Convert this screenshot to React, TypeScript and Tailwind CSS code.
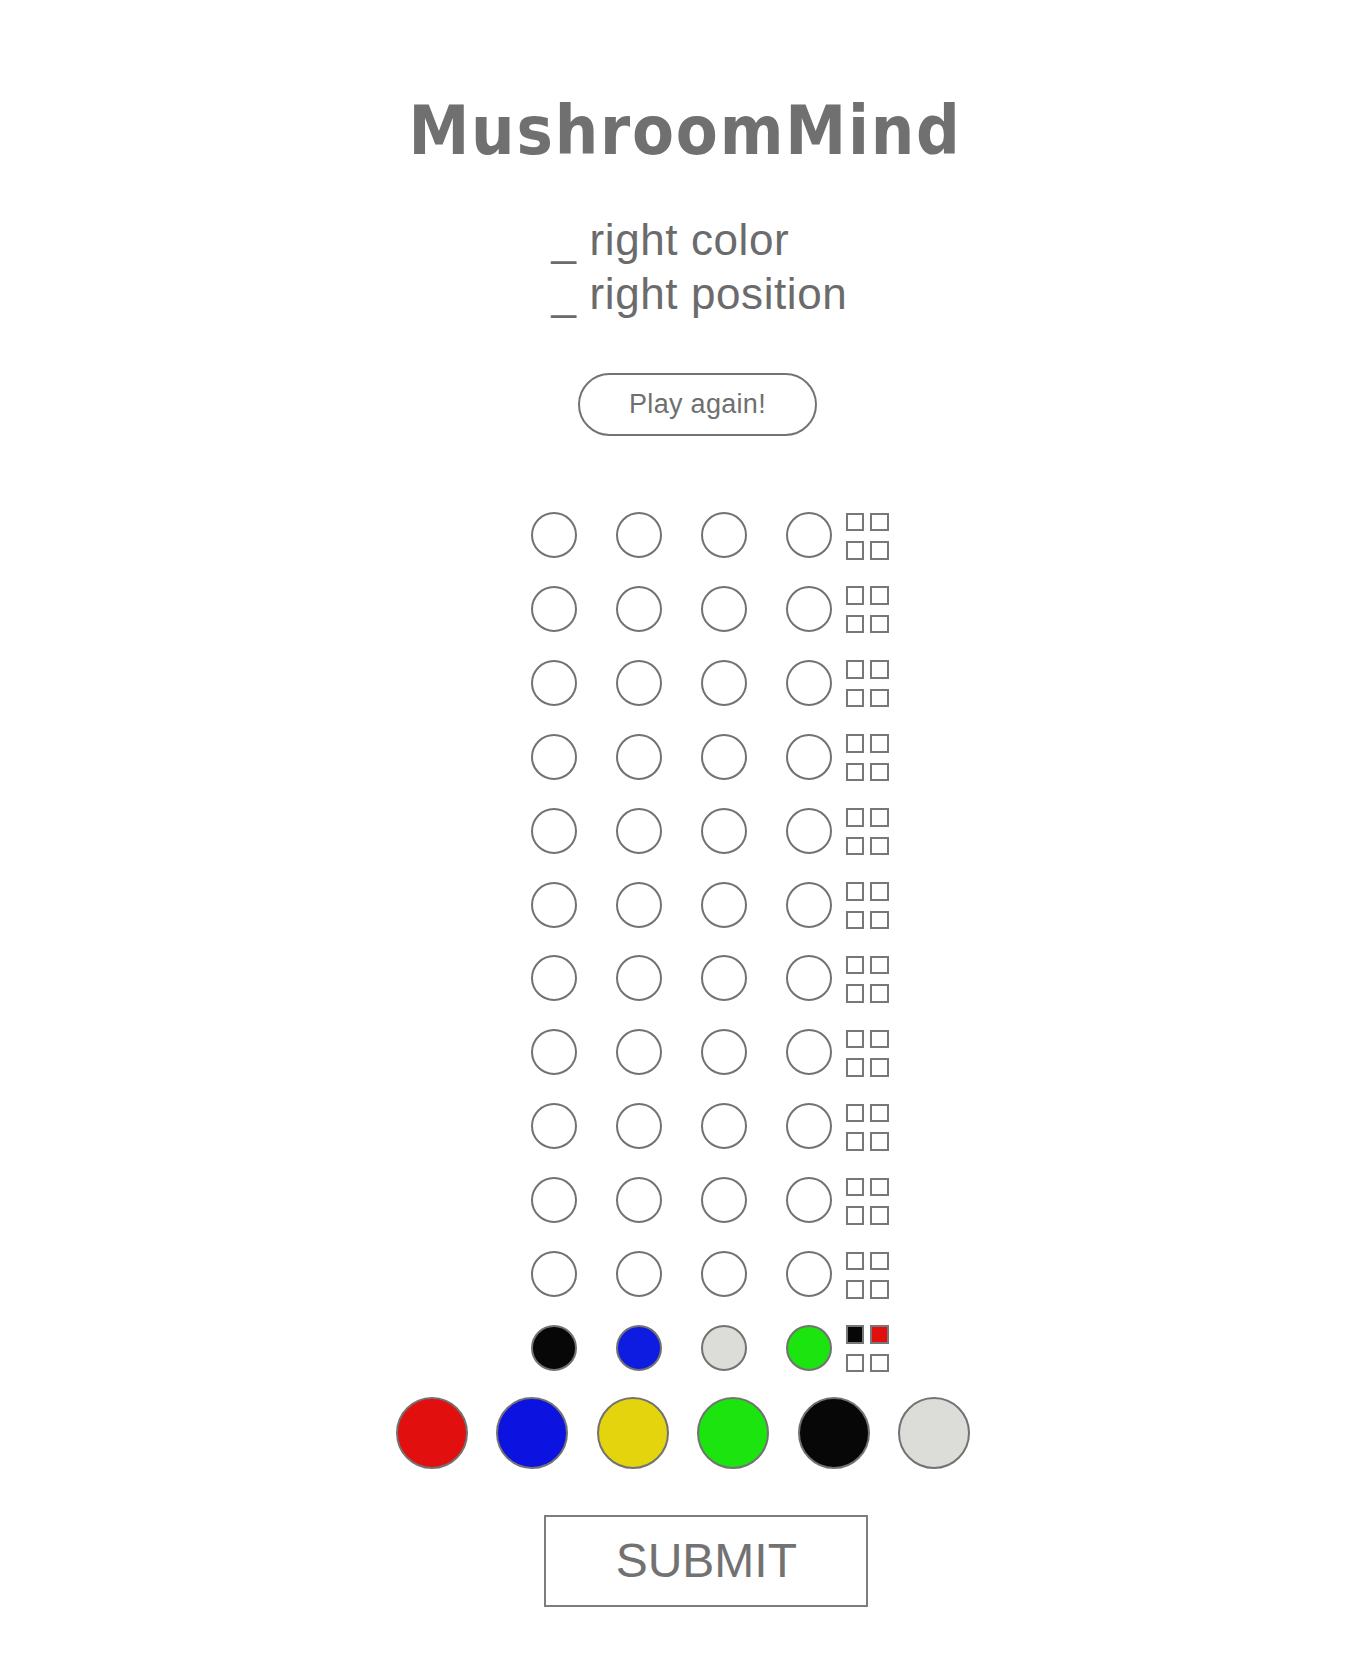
import React from "react";

const emptyRow = ["bg-white", "bg-white", "bg-white", "bg-white"];
const lastRow = ["bg-[#070707]", "bg-[#0d1ce0]", "bg-[#dcddd9]", "bg-[#1ce40f]"];
const emptyPegs = ["bg-white", "bg-white", "bg-white", "bg-white"];
const lastPegs = ["bg-[#070707]", "bg-[#e20f0f]", "bg-white", "bg-white"];

const palette = [
  "bg-[#e20f0f]",
  "bg-[#0c12e0]",
  "bg-[#e3d40d]",
  "bg-[#1ce40f]",
  "bg-[#070707]",
  "bg-[#dcddd9]",
];

function Row({ colors, pegs }: { colors: string[]; pegs: string[] }) {
  return (
    <div className="flex h-[46px] items-start">
      <div className="flex gap-[39px]">
        {colors.map((c, i) => (
          <div
            key={i}
            className={`h-[46px] w-[46px] rounded-full border-2 border-[#727272] ${c}`}
          />
        ))}
      </div>
      <div className="ml-[13.5px] mt-[0.5px] grid grid-cols-2 gap-x-[6px] gap-y-[10px]">
        {pegs.map((c, i) => (
          <div
            key={i}
            className={`h-[18.5px] w-[18.5px] border-2 border-[#777777] ${c}`}
          />
        ))}
      </div>
    </div>
  );
}

export default function App() {
  const rows = Array.from({ length: 11 });
  return (
    <div
      className="min-h-[1658px] w-full bg-white text-[#6f6f6f]"
      style={{ fontFamily: '"Liberation Sans", Arial, sans-serif' }}
    >
      <div className="flex flex-col items-center pt-[97px]">
        <h1
          className="m-0 h-[68px] pl-[4px] text-[68px] font-bold leading-[68px] tracking-[1.8px] text-[#707070]"
          style={{ fontFamily: '"DejaVu Sans Condensed", "DejaVu Sans", sans-serif' }}
        >
          MushroomMind
        </h1>

        <div className="mt-[47.8px] flex justify-center">
          <div className="ml-[33px] text-[44px] leading-[54px] tracking-[0.6px] text-[#6b6b6b]">
            <div>_ right color</div>
            <div>_ right position</div>
          </div>
        </div>

        <div className="mt-[52px] flex justify-center">
          <button className="ml-[29px] flex h-[63px] w-[238.5px] items-center justify-center rounded-full border-2 border-[#737373] bg-white text-[27px] tracking-[0.3px] text-[#6f6f6f]">
            Play again!
          </button>
        </div>

        <div className="mt-[76.3px] flex justify-center">
          <div className="ml-[54px] flex flex-col gap-[27.9px]">
            {rows.map((_, i) => (
              <Row key={i} colors={emptyRow} pegs={emptyPegs} />
            ))}
            <Row colors={lastRow} pegs={lastPegs} />
          </div>
        </div>

        <div className="mt-[25.7px] flex gap-[28.4px]">
          {palette.map((c, i) => (
            <div
              key={i}
              className={`h-[72px] w-[72px] rounded-full border-2 border-[#727272] ${c}`}
            />
          ))}
        </div>

        <div className="mt-[46.3px] flex justify-center">
          <button className="ml-[46.6px] flex h-[92px] w-[324px] items-center justify-center border-2 border-[#7d7d7d] bg-white text-[48px] text-[#727272]">
            SUBMIT
          </button>
        </div>
      </div>
    </div>
  );
}
